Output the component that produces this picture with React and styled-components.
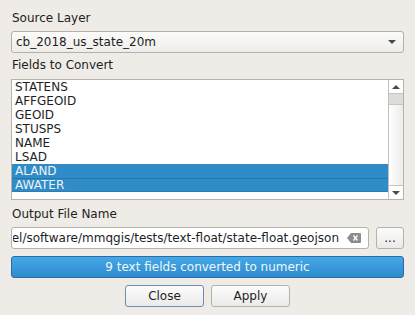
import styled, { createGlobalStyle } from "styled-components";

const GlobalStyle = createGlobalStyle`
  html, body {
    margin: 0;
    padding: 0;
    background: #efebe7;
  }
  body {
    font-family: "DejaVu Sans", "Liberation Sans", sans-serif;
    font-size: 12px;
    color: #1e1e1e;
  }
`;

const fields = [
  { name: "STATENS" },
  { name: "AFFGEOID" },
  { name: "GEOID" },
  { name: "STUSPS" },
  { name: "NAME" },
  { name: "LSAD" },
  { name: "ALAND", selected: true },
  { name: "AWATER", selected: true, divider: true },
];

export const Dialog = styled.div`
  width: 415px;
  height: 315px;
  box-sizing: border-box;
  padding: 11px 11px 0 11px;
  display: flex;
  flex-direction: column;
`;

export const Label = styled.div`
  height: 14px;
  line-height: 14px;
  padding-left: 1px;
  margin-top: ${(p) => p.$top || 0}px;
`;

export const Combo = styled.div`
  margin-top: 6px;
  height: 22px;
  box-sizing: border-box;
  border: 1px solid #b3afaa;
  border-radius: 3px;
  background: linear-gradient(#fbfbfa, #efedeb);
  display: flex;
  align-items: center;
  justify-content: space-between;
  padding: 0 7px 0 4px;
`;

export const DownArrow = styled.span`
  width: 0;
  height: 0;
  border-left: 4px solid transparent;
  border-right: 4px solid transparent;
  border-top: 4px solid #4a4a4a;
`;

export const UpArrow = styled.span`
  width: 0;
  height: 0;
  border-left: 4px solid transparent;
  border-right: 4px solid transparent;
  border-bottom: 4px solid #4a4a4a;
`;

export const ListBox = styled.div`
  margin-top: 7px;
  height: 121px;
  box-sizing: border-box;
  border: 1px solid #b6b2ad;
  background: #fff;
  display: flex;
`;

export const Rows = styled.ul`
  flex: 1;
  margin: 0;
  padding: 0;
  list-style: none;
`;

export const Row = styled.li`
  height: 14px;
  line-height: ${(p) => (p.$divider ? 12 : 14)}px;
  padding-left: 3px;
  box-sizing: border-box;
  background: ${(p) => (p.$selected ? "#308cc6" : "transparent")};
  color: ${(p) => (p.$selected ? "#eef3f8" : "#1e1e1e")};
  border-top: ${(p) => (p.$divider ? "1px solid #2877ab" : "none")};
  border-bottom: ${(p) => (p.$divider ? "1px solid #2b7eb5" : "none")};
`;

export const ScrollBar = styled.div`
  width: 14px;
  border-left: 1px solid #c3c0bc;
  display: flex;
  flex-direction: column;
  background: linear-gradient(to right, #ffffff, #eeeceb);
`;

export const ScrollButton = styled.div`
  height: 13px;
  display: flex;
  align-items: center;
  justify-content: center;
  background: #fff;
  border-top: ${(p) => (p.$bottom ? "1px solid #c8c5c1" : "none")};
  border-bottom: ${(p) => (p.$bottom ? "none" : "1px solid #c8c5c1")};
`;

export const ScrollHandle = styled.div`
  height: 10px;
  background: #dcdcdb;
  border-bottom: 1px solid #c8c5c1;
`;

export const ScrollTrack = styled.div`
  flex: 1;
`;

export const FileRow = styled.div`
  margin-top: 6px;
  display: flex;
  gap: 7px;
  height: 22px;
`;

export const FileInput = styled.div`
  flex: 1;
  min-width: 0;
  box-sizing: border-box;
  border: 1px solid #b6b2ad;
  border-radius: 3px;
  background: #fff;
  display: flex;
  align-items: center;
  padding: 0 7px 0 1px;
`;

export const FileText = styled.div`
  flex: 1;
  min-width: 0;
  display: flex;
  justify-content: flex-end;
  overflow: hidden;
  white-space: nowrap;

  span {
    flex: none;
  }
`;

export const ClearIcon = styled.svg`
  flex: none;
  margin-left: 8px;
`;

export const Button = styled.button`
  font: inherit;
  color: #1e1e1e;
  box-sizing: border-box;
  width: ${(p) => p.$width || 79}px;
  height: 22px;
  padding: 0;
  border: 1px solid ${(p) => (p.$default ? "#6d8eae" : "#b5b1ac")};
  border-radius: 3px;
  background: linear-gradient(#fcfcfc, #ebeae9);
`;

export const Progress = styled.div`
  margin-top: 7px;
  height: 22px;
  box-sizing: border-box;
  border: 1px solid #2b6da3;
  border-radius: 3px;
  background: linear-gradient(#45a8e8, #2f8bcd);
  color: #f2f7fb;
  display: flex;
  align-items: center;
  justify-content: center;
`;

export const Buttons = styled.div`
  margin-top: 7px;
  display: flex;
  justify-content: center;
  gap: 7px;
`;

export default function App() {
  return (
    <>
      <GlobalStyle />
      <Dialog>
        <Label>Source Layer</Label>
        <Combo>
          <span>cb_2018_us_state_20m</span>
          <DownArrow />
        </Combo>
        <Label $top={5}>Fields to Convert</Label>
        <ListBox>
          <Rows>
            {fields.map(({ name, selected, divider }) => (
              <Row key={name} $selected={selected} $divider={divider}>
                {name}
              </Row>
            ))}
          </Rows>
          <ScrollBar>
            <ScrollButton>
              <UpArrow />
            </ScrollButton>
            <ScrollHandle />
            <ScrollTrack />
            <ScrollButton $bottom>
              <DownArrow />
            </ScrollButton>
          </ScrollBar>
        </ListBox>
        <Label $top={7}>Output File Name</Label>
        <FileRow>
          <FileInput>
            <FileText>
              <span>el/software/mmqgis/tests/text-float/state-float.geojson</span>
            </FileText>
            <ClearIcon width="14" height="10" viewBox="0 0 14 10">
              <path d="M4 0 H13 Q14 0 14 1 V9 Q14 10 13 10 H4 L0 5 Z" fill="#8c8c8c" />
              <path d="M6.5 2.5 L10.5 7.5 M10.5 2.5 L6.5 7.5" stroke="#fff" strokeWidth="1.3" />
            </ClearIcon>
          </FileInput>
          <Button $width={28}>...</Button>
        </FileRow>
        <Progress>9 text fields converted to numeric</Progress>
        <Buttons>
          <Button $default>Close</Button>
          <Button>Apply</Button>
        </Buttons>
      </Dialog>
    </>
  );
}
